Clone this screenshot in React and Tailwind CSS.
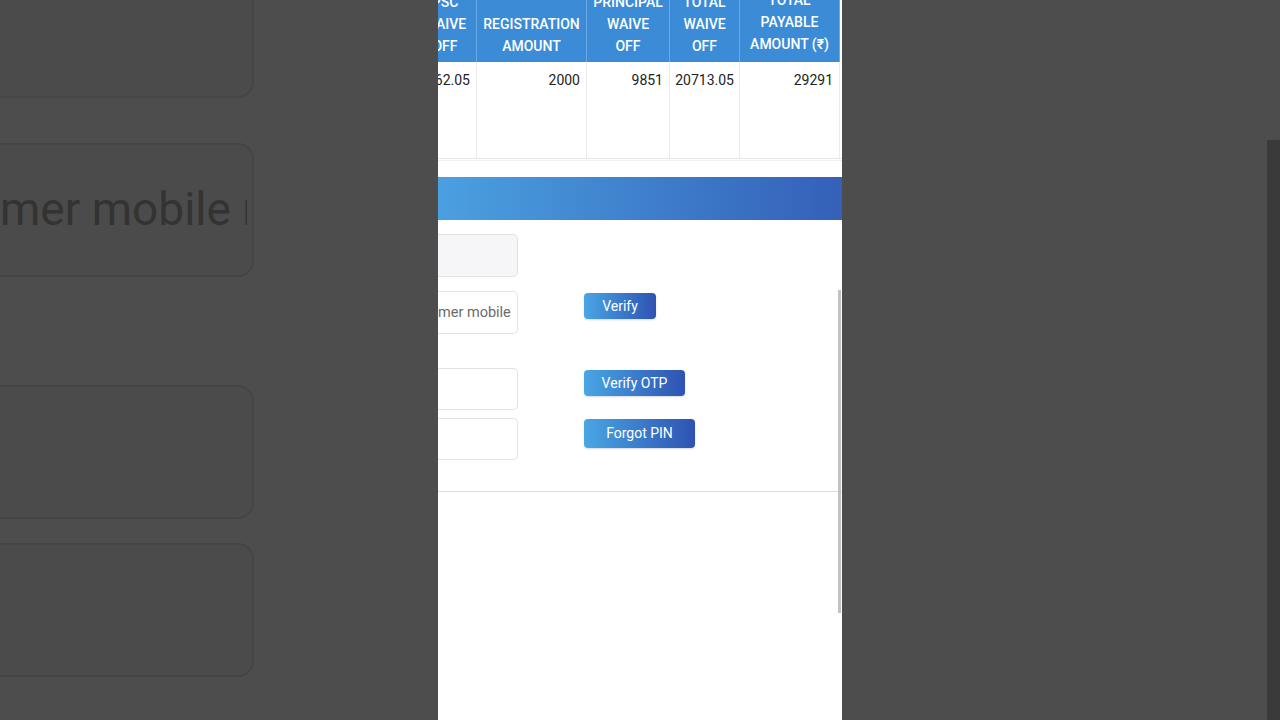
import React from "react";

const headBorder = "border-r border-r-[#6aa9e5]";
const bodyBorder = "border-r border-r-[#ebebeb]";

function HeadCell({ w, children, extra = "" }) {
  return (
    <div className={`${w} ${headBorder} h-full shrink-0 flex flex-col justify-end items-center text-center pb-[5px] overflow-hidden ${extra}`}>
      {children}
    </div>
  );
}

function BodyCell({ w, children, pr = "pr-[6px]" }) {
  return (
    <div className={`${w} ${bodyBorder} h-full shrink-0 flex justify-end overflow-hidden pt-[8px] ${pr}`}>
      <span className="whitespace-nowrap">{children}</span>
    </div>
  );
}

function GradButton({ w, h, children }) {
  return (
    <div className={`${w} ${h} rounded-[4px] bg-gradient-to-r from-[#4aa6e4] to-[#2f52b2] text-white text-[14px] flex items-center justify-center shadow-[0_1px_2px_rgba(0,0,0,0.15)]`}>
      {children}
    </div>
  );
}

function Phone() {
  return (
    <div className="relative w-[404px] h-[720px] shrink-0 bg-white overflow-hidden font-['Roboto','Liberation_Sans',sans-serif]">
      {/* table header */}
      <div className="flex h-[62px] bg-[#3b8bd6] text-white text-[14px] font-medium leading-[22px] uppercase">
        <div className={`w-[39px] ${headBorder} h-full shrink-0 flex justify-end overflow-hidden`}>
          <div className="w-[62px] shrink-0 flex flex-col justify-end items-center text-center pb-[5px]">
            <div>PSC</div>
            <div>WAIVE</div>
            <div>OFF</div>
          </div>
        </div>
        <HeadCell w="w-[110px]">
          <div>REGISTRATION</div>
          <div>AMOUNT</div>
        </HeadCell>
        <HeadCell w="w-[83px]">
          <div>PRINCIPAL</div>
          <div>WAIVE</div>
          <div>OFF</div>
        </HeadCell>
        <HeadCell w="w-[70px]">
          <div>TOTAL</div>
          <div>WAIVE</div>
          <div>OFF</div>
        </HeadCell>
        <HeadCell w="w-[100px]" extra="pb-[7px]">
          <div>TOTAL</div>
          <div>PAYABLE</div>
          <div>AMOUNT (₹)</div>
        </HeadCell>
        <div className="flex-1 bg-white" />
      </div>
      {/* table body */}
      <div className="flex h-[97px] text-[14px] leading-[20px] text-[#222] border-b border-b-[#e6e6e6]">
        <BodyCell w="w-[39px]">10862.05</BodyCell>
        <BodyCell w="w-[110px]">2000</BodyCell>
        <BodyCell w="w-[83px]">9851</BodyCell>
        <BodyCell w="w-[70px]" pr="pr-[5px]">20713.05</BodyCell>
        <BodyCell w="w-[100px]">29291</BodyCell>
        <div className="flex-1" />
      </div>
      <div className="h-px mt-px bg-[#f0f0f0]" />
      {/* gradient bar */}
      <div className="mt-[16px] h-[43px] bg-gradient-to-r from-[#4ba0e1] via-[#3f80cc] to-[#3560b8]" />
      {/* form */}
      <div className="flex flex-col text-[14px]">
        <div className="flex mt-[14px]">
          <div className="w-[80px] h-[43px] rounded-r-[5px] border border-l-0 border-[#e2e2e2] bg-[#f6f5f8]" />
        </div>
        <div className="flex mt-[14px] items-start">
          <div className="w-[80px] h-[43px] rounded-r-[5px] border border-l-0 border-[#e2e2e2] bg-white flex items-center">
            <div className="w-[74px] overflow-hidden whitespace-nowrap text-[14.5px] text-[#6b6b6b]">mer mobile number</div>
          </div>
          <div className="ml-[66px] mt-[2px]">
            <GradButton w="w-[72px]" h="h-[26px]">Verify</GradButton>
          </div>
        </div>
        <div className="flex mt-[34px] items-start">
          <div className="w-[80px] h-[42px] rounded-r-[5px] border border-l-0 border-[#e2e2e2] bg-white" />
          <div className="ml-[66px] mt-[2px]">
            <GradButton w="w-[101px]" h="h-[26px]">Verify OTP</GradButton>
          </div>
        </div>
        <div className="flex mt-[8px] items-start">
          <div className="w-[80px] h-[42px] rounded-r-[5px] border border-l-0 border-[#e2e2e2] bg-white" />
          <div className="ml-[66px] mt-[1px]">
            <GradButton w="w-[111px]" h="h-[29px]">Forgot PIN</GradButton>
          </div>
        </div>
        <div className="mt-[31px] h-px bg-[#dcdcdc]" />
      </div>
      {/* scrollbar */}
      <div className="absolute left-[400px] top-[290px] w-[3px] h-[323px] bg-[#c2c2c2]" />
    </div>
  );
}

export default function App() {
  return (
    <div className="w-[1280px] h-[720px] flex bg-[#4d4d4d] overflow-hidden">
      {/* left blurred background */}
      <div className="w-[438px] h-[720px] shrink-0 flex flex-col font-['Roboto','Liberation_Sans',sans-serif]">
        <div className="w-[254px] h-[98px] shrink-0 rounded-br-[16px] border-b-2 border-r-2 border-[#454545] bg-[#4b4b4b]" />
        <div className="mt-[45px] w-[254px] h-[134px] shrink-0 rounded-r-[16px] border-y-2 border-r-2 border-[#454545] bg-[#4b4b4b] flex items-center">
          <div className="w-[247px] overflow-hidden whitespace-nowrap text-[46px] text-[#333] leading-none mt-[-2px]">mer mobile number</div>
        </div>
        <div className="mt-[108px] w-[254px] h-[134px] shrink-0 rounded-r-[16px] border-y-2 border-r-2 border-[#454545] bg-[#4b4b4b]" />
        <div className="mt-[24px] w-[254px] h-[134px] shrink-0 rounded-r-[16px] border-y-2 border-r-2 border-[#454545] bg-[#4b4b4b]" />
      </div>
      <Phone />
      {/* right blurred background */}
      <div className="flex-1 h-[720px] flex justify-end">
        <div className="w-[13px] mt-[140px] h-[580px] bg-[#3a3a3a]" />
      </div>
    </div>
  );
}
